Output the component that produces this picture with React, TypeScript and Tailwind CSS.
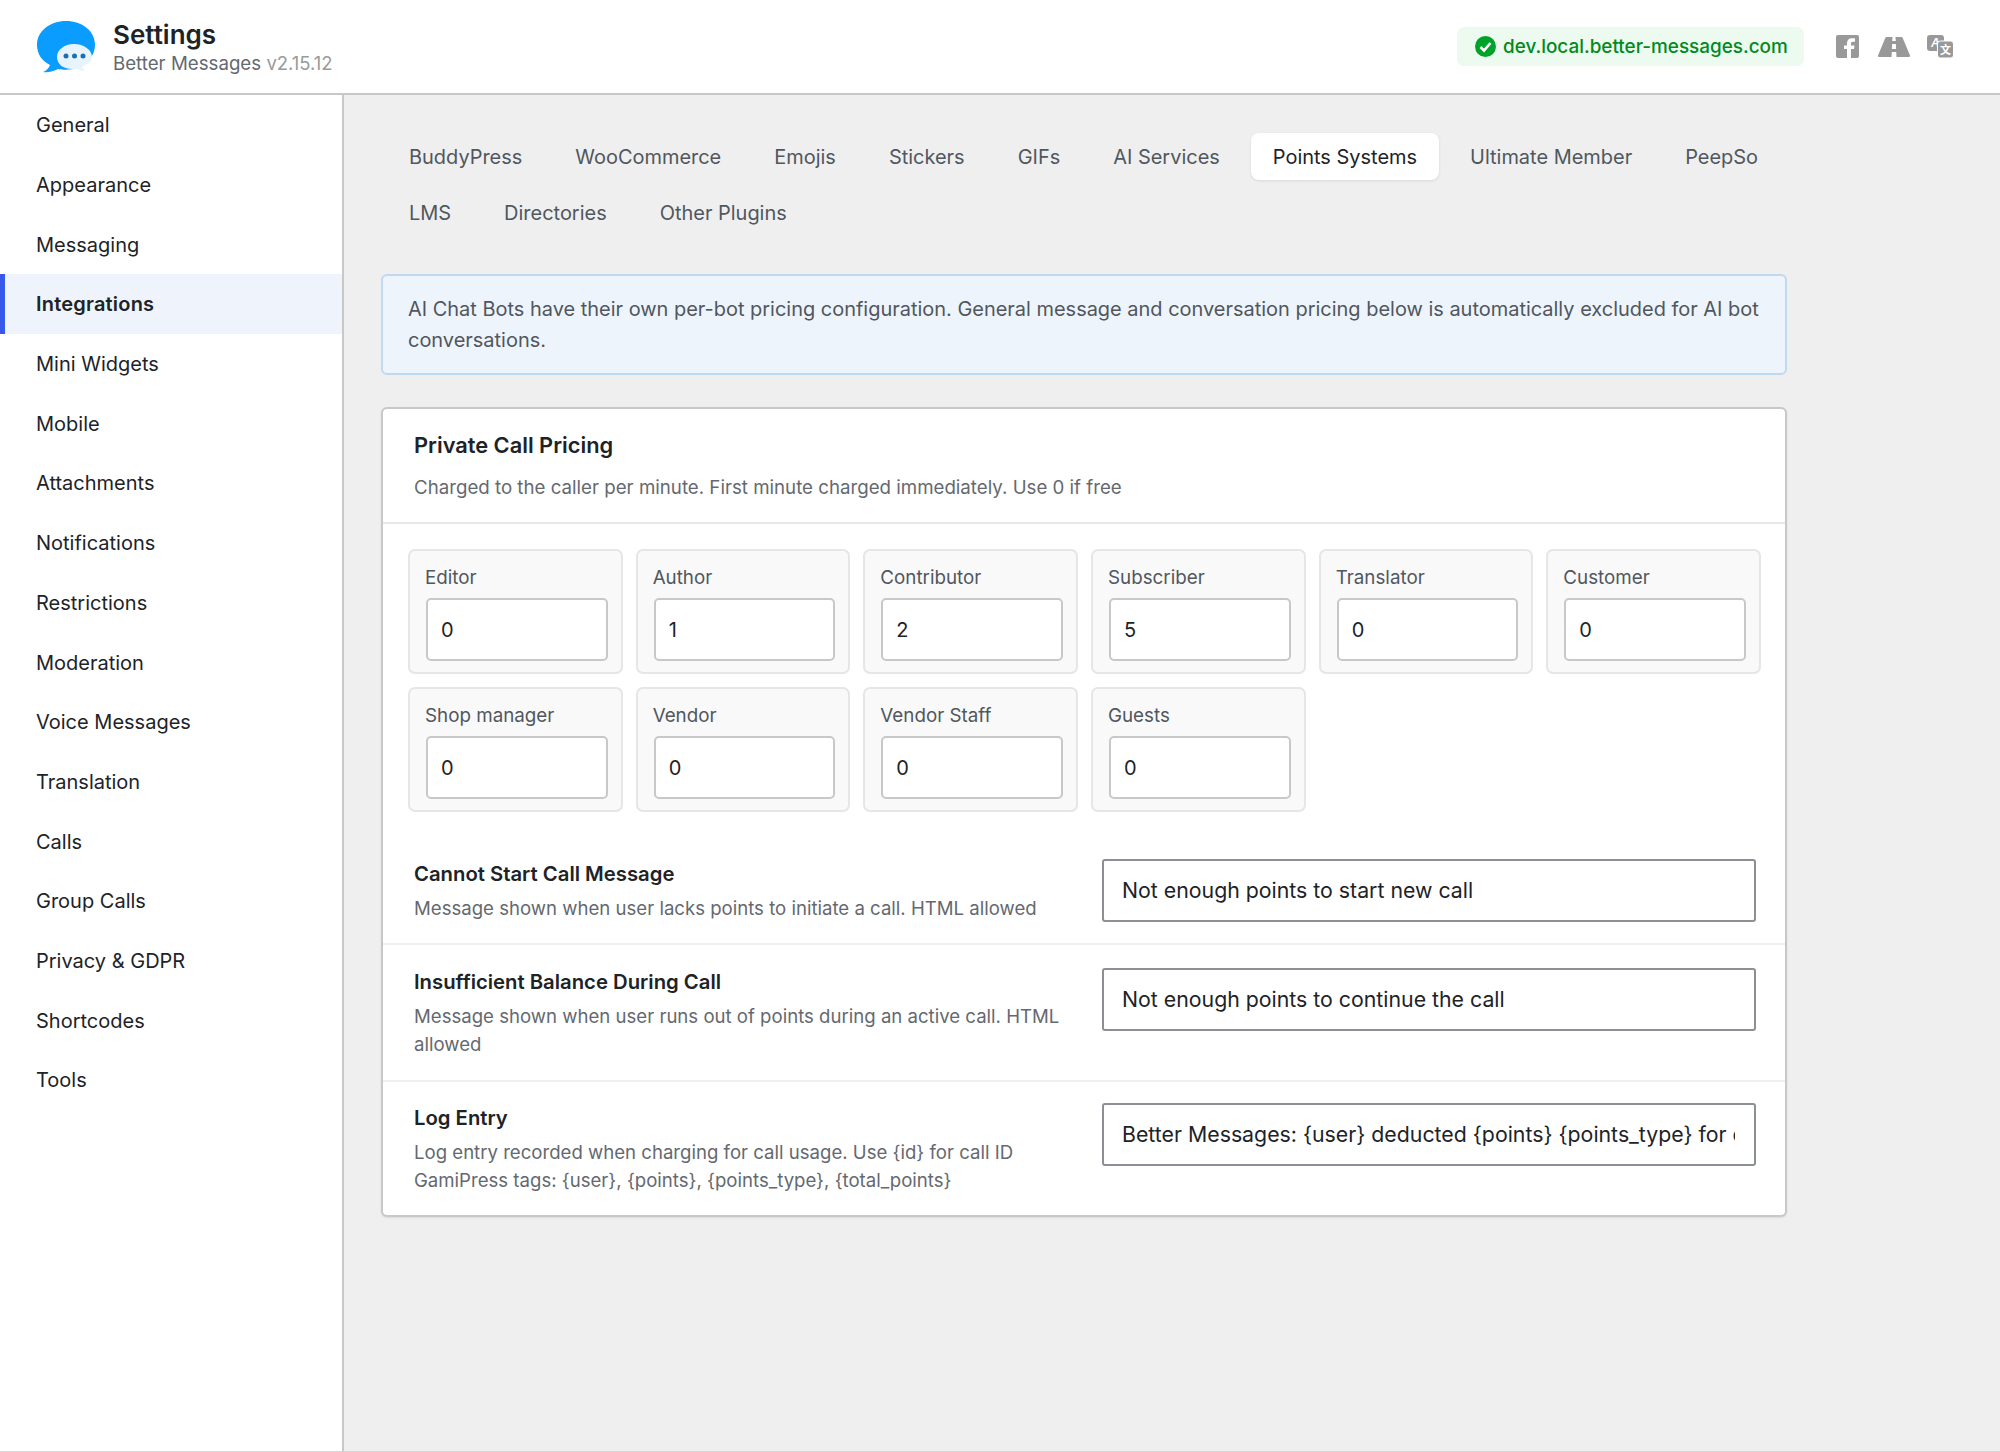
import React from "react";

const nav = ["General","Appearance","Messaging","Integrations","Mini Widgets","Mobile","Attachments","Notifications","Restrictions","Moderation","Voice Messages","Translation","Calls","Group Calls","Privacy & GDPR","Shortcodes","Tools"];
const tabs1 = ["BuddyPress","WooCommerce","Emojis","Stickers","GIFs","AI Services","Points Systems","Ultimate Member","PeepSo"];
const tabs2 = ["LMS","Directories","Other Plugins"];
const roles: [string,string][] = [["Editor","0"],["Author","1"],["Contributor","2"],["Subscriber","5"],["Translator","0"],["Customer","0"],["Shop manager","0"],["Vendor","0"],["Vendor Staff","0"],["Guests","0"]];

function Logo() {
  return (
    <svg width="60" height="56" viewBox="0 0 60 56" className="shrink-0">
      <path d="M30 2C14 2 1 12 1 26c0 9 5 16 13 20-1 3-4 6-7 7 5 1 11-1 15-3 3 .6 5 .8 8 .8 16 0 29-11 29-25S46 2 30 2Z" fill="#0a9cff" />
      <path d="M38 25c-10 0-17 6-17 13 0 7 6 12 15 12 2 0 4 0 5-.6 2 1.600 5 2.600 8 2.300-1.500-1-2.500-2.300-3-3.700C52 45 56 42 56 38c0-7-8-13-18-13Z" fill="#e8f4fd" />
      <circle cx="30" cy="37" r="2.500" fill="#1a6fb5" />
      <circle cx="38.500" cy="37" r="2.500" fill="#1a6fb5" />
      <circle cx="47" cy="37" r="2.500" fill="#1a6fb5" />
    </svg>
  );
}

function Header() {
  return (
    <header className="h-[95px] shrink-0 bg-white border-b-2 border-[#c8c8c8] flex items-center pl-[36px] pr-[46px]">
      <Logo />
      <div className="ml-[17px] pt-[2px] flex flex-col">
        <div className="text-[26px] leading-[32px] font-semibold text-[#1d2327]">Settings</div>
        <div className="text-[18.700px] leading-[25px] text-[#646970]">
          Better Messages <span className="text-[18.500px] text-[#9a9a9a]">v2.15.12</span>
        </div>
      </div>
      <div className="ml-auto flex items-center">
        <div className="h-[39px] w-[347px] rounded-[7px] bg-[#edfaef] flex items-center pl-[18px] text-[#008a20] text-[18.900px] font-medium">
          <svg width="21" height="21" viewBox="0 0 21 21" className="mr-[7px] shrink-0">
            <circle cx="10.500" cy="10.500" r="10.500" fill="#00a32a" />
            <path d="M5.500 11l3.500 3.500 6.500-7.500" fill="none" stroke="#fff" strokeWidth="2.600" />
          </svg>
          <span className="pt-px">dev.local.better-messages.com</span>
        </div>
        <svg width="23" height="23" viewBox="0 0 23 23" className="ml-[32px]">
          <path d="M2 0h19a2 2 0 0 1 2 2v19a2 2 0 0 1-2 2h-6v-9h3l.5-3.500H15V8.500c0-1 .5-1.800 2-1.800h2V3.500c-1-.1-2-.2-3-.2-3 0-5 1.800-5 5v2.200H8V14h3v9H2a2 2 0 0 1-2-2V2a2 2 0 0 1 2-2Z" fill="#999" />
        </svg>
        <svg width="32" height="20" viewBox="0 0 32 20" className="ml-[19px]">
          <path d="M8.500 0h6l-.3 4h3.600l-.3-4h6c.5 0 .9.300 1.100.8L32 18.500c.2.700-.2 1.500-1 1.500H18.500l-.3-5h-4.400l-.3 5H1c-.8 0-1.200-.8-1-1.500L7.400.8C7.600.3 8 0 8.500 0Zm5.600 7l-.2 5h4.200l-.2-5h-3.800Z" fill="#999" />
        </svg>
        <svg width="27" height="23" viewBox="0 0 27 23" className="ml-[17px]">
          <rect x="0" y="0" width="17" height="16" rx="3" fill="#999" />
          <text x="4" y="12" fontSize="12" fontWeight="700" fontStyle="italic" fill="#fff" fontFamily="'Liberation Sans', sans-serif">A</text>
          <rect x="10.500" y="6" width="16" height="17" rx="3" fill="#999" stroke="#fff" strokeWidth="1" />
          <text x="13" y="19" fontSize="11" fontWeight="700" fill="#fff" fontFamily="'Noto Sans CJK SC', sans-serif">文</text>
        </svg>
      </div>
    </header>
  );
}

function Sidebar() {
  return (
    <aside className="w-[344px] shrink-0 bg-white border-r-2 border-[#c8c8c8]">
      {nav.map((n) => {
        const active = n === "Integrations";
        return (
          <div key={n} className={active
            ? "h-[59.700px] flex items-center pl-[31px] pt-px border-l-[5px] border-[#3858e9] bg-[#eff4fc] text-[20px] tracking-[0.2px] font-semibold text-[#1d2327]"
            : "h-[59.700px] flex items-center pl-[36px] pt-px text-[20px] text-[#1d2327]"}>
            {n}
          </div>
        );
      })}
    </aside>
  );
}

function Tab({ label }: { label: string }) {
  const active = label === "Points Systems";
  return (
    <div className={active
      ? "h-[47px] px-[22px] pt-[2px] flex items-center rounded-[8px] bg-white text-[#1d2327] text-[19.970px] shadow-[0_1px_3px_rgba(0,0,0,0.1)]"
      : "h-[47px] px-[22px] pt-[2px] flex items-center text-[#50575e] text-[19.970px]"}>
      {label}
    </div>
  );
}

function RoleCard({ label, value }: { label: string; value: string }) {
  return (
    <div className="h-[125px] rounded-[7px] border-2 border-[#e6e6e6] bg-[#f9f9f9] pt-[15px] pl-[15px] pr-[14px]">
      <div className="text-[18.800px] leading-[24px] text-[#50575e]">{label}</div>
      <input readOnly value={value} className="mt-[8px] ml-[1px] block w-[181.500px] h-[63px] rounded-[5px] border-2 border-[#c8c8c8] bg-white pl-[13px] text-[20px] text-[#1d2327] outline-none" />
    </div>
  );
}

function Row({ title, desc, value, variant }: { title: string; desc: React.ReactNode; value: string; variant: "first" | "second" | "third" }) {
  const cls =
    variant === "first"
      ? "flex items-start pl-[31px] pr-[29px] pt-[22px] pb-[21px]"
      : variant === "second"
      ? "flex items-start pl-[31px] pr-[29px] pt-[22px] pb-[22px] border-t-2 border-[#f0f0f1]"
      : "flex items-start pl-[31px] pr-[29px] pt-[20px] pb-[21px] border-t-2 border-[#f0f0f1]";
  const left =
    variant === "first"
      ? "w-[688px] shrink-0 pr-[20px] pt-px"
      : variant === "second"
      ? "w-[688px] shrink-0 pr-[20px]"
      : "w-[688px] shrink-0 pr-[20px] pt-px";
  return (
    <div className={cls}>
      <div className={left}>
        <div className="text-[20.300px] leading-[28px] pt-px font-semibold text-[#1d2327]">{title}</div>
        <div className="mt-[6px] text-[18.600px] leading-[28px] text-[#646970]">{desc}</div>
      </div>
      <input readOnly value={value} className="block w-[655px] h-[62.500px] mt-px rounded-[3px] border-2 border-[#8c8f94] bg-white pl-[18px] pr-[19px] text-[21.300px] text-[#1d2327] outline-none" />
    </div>
  );
}

export default function App() {
  return (
    <div className="h-[1452px] w-[2000px] flex flex-col overflow-hidden bg-[#efefef] font-['Inter','Liberation_Sans',sans-serif] border-b border-[#d8d8d8]">
      <Header />
      <div className="flex flex-1 min-h-0">
        <Sidebar />
        <main className="flex-1 pl-[37px] pt-[38px]">
          <div className="w-[1406px]">
            <div className="pl-[6px] flex flex-col gap-[9px]">
              <div className="flex gap-[9px]">{tabs1.map((t) => <Tab key={t} label={t} />)}</div>
              <div className="flex gap-[9px]">{tabs2.map((t) => <Tab key={t} label={t} />)}</div>
            </div>
            <div className="mt-[38px] h-[101px] rounded-[6px] border-2 border-[#bfd9f0] bg-[#eef4fc] pl-[25px] pr-[20px] pt-[18px] text-[#50575e] text-[19.950px] leading-[31px]">
              AI Chat Bots have their own per-bot pricing configuration. General message and conversation pricing below is automatically excluded for AI bot conversations.
            </div>
            <section className="mt-[32px] rounded-[6px] border-2 border-[#c8c8c8] bg-white shadow-[0_1px_2px_rgba(0,0,0,0.08)]">
              <div className="h-[115px] border-b-2 border-[#e8e8e8] pl-[31px] pt-[22px]">
                <div className="text-[21.800px] leading-[28px] font-semibold text-[#1d2327]">Private Call Pricing</div>
                <div className="mt-[15px] text-[18.700px] leading-[28px] text-[#646970]">Charged to the caller per minute. First minute charged immediately. Use 0 if free</div>
              </div>
              <div className="pt-[25px] px-[25px] pb-[24px] grid grid-cols-6 gap-x-[13px] gap-y-[13px] w-[1403px]">
                {roles.map(([l, v]) => <RoleCard key={l} label={l} value={v} />)}
              </div>
              <Row variant="first" title="Cannot Start Call Message" desc="Message shown when user lacks points to initiate a call. HTML allowed" value="Not enough points to start new call" />
              <Row variant="second" title="Insufficient Balance During Call" desc="Message shown when user runs out of points during an active call. HTML allowed" value="Not enough points to continue the call" />
              <Row variant="third" title="Log Entry" desc={<>Log entry recorded when charging for call usage. Use {"{id}"} for call ID<br />GamiPress tags: {"{user}, {points}, {points_type}, {total_points}"}</>} value="Better Messages: {user} deducted {points} {points_type} for call usage" />
            </section>
          </div>
        </main>
      </div>
    </div>
  );
}
